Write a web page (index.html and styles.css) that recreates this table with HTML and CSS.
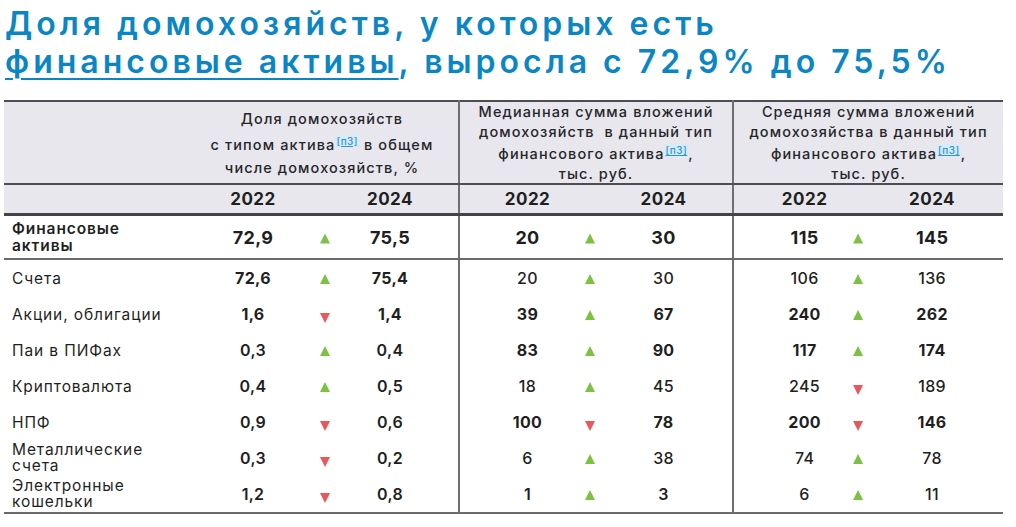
FILE: index.html
```html
<!DOCTYPE html>
<html lang="ru">
<head>
<meta charset="utf-8">
<title>Доля домохозяйств с финансовыми активами</title>
<link rel="stylesheet" href="styles.css">
</head>
<body>
<h1 class="title">Доля домохозяйств, у которых есть<br><span class="hl">финансовые активы</span>, выросла с 72,9% до 75,5%</h1>
<table class="grid">
  <colgroup>
    <col class="c-label"><col class="c-g1v1"><col class="c-g1a"><col class="c-g1v2">
    <col class="c-g2v1"><col class="c-g2a"><col class="c-g2v2">
    <col class="c-g3v1"><col class="c-g3a"><col class="c-g3v2">
  </colgroup>
  <thead>
    <tr class="head">
      <th></th>
      <th colspan="3" class="hg1">Доля домохозяйств<br>с типом актива<a class="fn">[п3]</a> в общем<br>числе домохозяйств, %</th>
      <th colspan="3" class="bl hg">Медианная сумма вложений<br>домохозяйств &nbsp;в данный тип<br>финансового актива<a class="fn">[п3]</a>,<br>тыс. руб.</th>
      <th colspan="3" class="bl hg">Средняя сумма вложений<br>домохозяйства в данный тип<br>финансового актива<a class="fn">[п3]</a>,<br>тыс. руб.</th>
    </tr>
    <tr class="years">
      <th></th>
      <th>2022</th><th></th><th class="e1">2024</th>
      <th class="bl s2">2022</th><th></th><th class="e2">2024</th>
      <th class="bl s3">2022</th><th></th><th class="e3">2024</th>
    </tr>
  </thead>
  <tbody>
    <tr class="total">
      <td class="lbl">Финансовые<br>активы</td>
      <td>72,9</td><td><i class="up"></i></td><td class="e1">75,5</td>
      <td class="bl s2">20</td><td><i class="up"></i></td><td class="e2">30</td>
      <td class="bl s3">115</td><td><i class="up"></i></td><td class="e3">145</td>
    </tr>
    <tr>
      <td class="lbl">Счета</td>
      <td class="b">72,6</td><td><i class="up"></i></td><td class="e1 b">75,4</td>
      <td class="bl s2 r">20</td><td><i class="up"></i></td><td class="e2 r">30</td>
      <td class="bl s3 r">106</td><td><i class="up"></i></td><td class="e3 r">136</td>
    </tr>
    <tr>
      <td class="lbl">Акции, облигации</td>
      <td class="b">1,6</td><td><i class="down"></i></td><td class="e1 b">1,4</td>
      <td class="bl s2 b">39</td><td><i class="up"></i></td><td class="e2 b">67</td>
      <td class="bl s3 b">240</td><td><i class="up"></i></td><td class="e3 b">262</td>
    </tr>
    <tr>
      <td class="lbl">Паи в ПИФах</td>
      <td>0,3</td><td><i class="up"></i></td><td class="e1">0,4</td>
      <td class="bl s2 b">83</td><td><i class="up"></i></td><td class="e2 b">90</td>
      <td class="bl s3 b">117</td><td><i class="up"></i></td><td class="e3 b">174</td>
    </tr>
    <tr>
      <td class="lbl">Криптовалюта</td>
      <td>0,4</td><td><i class="up"></i></td><td class="e1">0,5</td>
      <td class="bl s2 r">18</td><td><i class="up"></i></td><td class="e2 r">45</td>
      <td class="bl s3 r">245</td><td><i class="down"></i></td><td class="e3 r">189</td>
    </tr>
    <tr>
      <td class="lbl">НПФ</td>
      <td>0,9</td><td><i class="down"></i></td><td class="e1">0,6</td>
      <td class="bl s2 b">100</td><td><i class="down"></i></td><td class="e2 b">78</td>
      <td class="bl s3 b">200</td><td><i class="down"></i></td><td class="e3 b">146</td>
    </tr>
    <tr>
      <td class="lbl two">Металлические<br>счета</td>
      <td>0,3</td><td><i class="down"></i></td><td class="e1">0,2</td>
      <td class="bl s2 r">6</td><td><i class="up"></i></td><td class="e2 r">38</td>
      <td class="bl s3 r">74</td><td><i class="up"></i></td><td class="e3 r">78</td>
    </tr>
    <tr>
      <td class="lbl two">Электронные<br>кошельки</td>
      <td>1,2</td><td><i class="down"></i></td><td class="e1">0,8</td>
      <td class="bl s2">1</td><td><i class="up"></i></td><td class="e2">3</td>
      <td class="bl s3 r">6</td><td><i class="up"></i></td><td class="e3 r">11</td>
    </tr>
  </tbody>
</table>
</body>
</html>
```

FILE: styles.css
```css
html, body {
  margin: 0;
  background: #ffffff;
}

body {
  font-family: Inter, "Noto Sans", sans-serif;
  color: #1f1f22;
}

.title {
  margin: 0;
  padding: 5px 0 0 5px;
  font-size: 32px;
  line-height: 38px;
  font-weight: 600;
  color: #0b86c4;
  letter-spacing: 4px;
}

.hl {
  text-decoration: underline;
  text-decoration-thickness: 2px;
  text-underline-offset: 5px;
}

.grid {
  margin: 19px 0 0 4px;
  width: 999px;
  table-layout: fixed;
  border-collapse: collapse;
  border-top: 2px solid #4d4d52;
  border-bottom: 2px solid #6a6a6e;
}

.c-label { width: 202px; }
.c-g1v1 { width: 94px; }
.c-g1a { width: 50px; }
.c-g1v2 { width: 109px; }
.c-g2v1 { width: 108px; }
.c-g2a { width: 46px; }
.c-g2v2 { width: 120px; }
.c-g3v1 { width: 102px; }
.c-g3a { width: 46px; }
.c-g3v2 { width: 122px; }

th, td {
  padding: 0;
  text-align: center;
  vertical-align: middle;
}

thead tr {
  background: #e7e7ed;
}

.head th {
  height: 78px;
  font-size: 14.5px;
  font-weight: 500;
  line-height: 19.5px;
  color: #26262a;
  border-bottom: 2px solid #4d4d52;
  letter-spacing: 1.1px;
  white-space: nowrap;
}

.head .hg1 {
  line-height: 23px;
  padding-right: 20px;
}

.years th {
  height: 28px;
  font-size: 17px;
  font-weight: 700;
  color: #1f1f22;
  border-bottom: 3px solid #444448;
  letter-spacing: 0.5px;
}

.bl {
  border-left: 2px solid #6f6f73;
}

.e1 { padding-right: 28px; }
.e2 { padding-right: 18px; }
.e3 { padding-right: 20px; }
.s2 { padding-left: 28px; }
.s3 { padding-left: 40px; }

tbody td {
  height: 36px;
  font-size: 16px;
  font-weight: 600;
  color: #1f1f22;
  letter-spacing: 0.3px;
}

tbody td.b { font-weight: 700; }
tbody td.r { font-weight: 500; }

tbody .total td {
  height: 42px;
  font-size: 18px;
  font-weight: 700;
  border-bottom: 2px solid #6a6a6e;
}

td.lbl {
  text-align: left;
  padding-left: 8px;
  font-size: 15.5px;
  font-weight: 400;
  letter-spacing: 0.9px;
  color: #1f1f22;
}

.total td.lbl {
  font-size: 15.5px;
  font-weight: 600;
  line-height: 17px;
}

td.two {
  line-height: 16px;
}

.fn {
  font-size: 10px;
  font-weight: 500;
  color: #2a96d8;
  background: #d6ecf9;
  text-decoration: underline;
  vertical-align: 5px;
  padding: 0 1px;
  letter-spacing: 0.5px;
}

.up, .down {
  display: inline-block;
  width: 10px;
  height: 10px;
}

.up {
  background: #7cc142;
  clip-path: polygon(50% 0, 100% 100%, 0 100%);
}

.down {
  background: #e9575b;
  clip-path: polygon(0 0, 100% 0, 50% 100%);
  position: relative;
  top: 3px;
}
```
